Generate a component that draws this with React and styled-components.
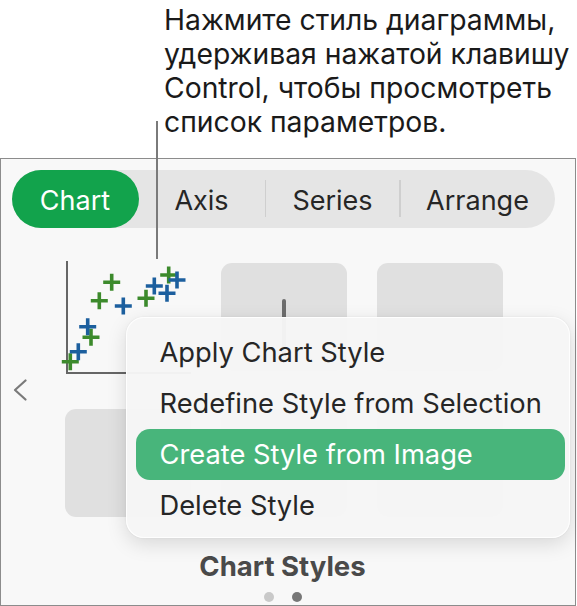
import React from 'react';
import styled, { createGlobalStyle } from 'styled-components';

const GlobalStyle = createGlobalStyle`
  body {
    margin: 0;
    background: #ffffff;
    font-family: 'Inter', 'Liberation Sans', sans-serif;
  }
`;

const Page = styled.div`
  position: relative;
  width: 577px;
  height: 606px;
  overflow: hidden;
`;

const Callout = styled.div`
  box-sizing: border-box;
  height: 158px;
  padding: 3px 0 0 164px;
  font-size: 28.3px;
  line-height: 34px;
  color: #1a1a1a;
`;

const Leader = styled.div`
  position: absolute;
  left: 156px;
  top: 121px;
  width: 1.5px;
  height: 138px;
  background: #7a7a7a;
  z-index: 3;
`;

const Panel = styled.div`
  position: relative;
  box-sizing: border-box;
  width: 576px;
  height: 448px;
  border: 1.5px solid #8c8c8c;
  background: #f8f8f8;
  padding: 10.5px 0 0 10.5px;
`;

const TabBar = styled.div`
  display: flex;
  align-items: center;
  width: 543px;
  height: 58px;
  border-radius: 29px;
  background: #e5e5e5;
`;

const Tab = styled.div`
  display: flex;
  align-items: center;
  justify-content: center;
  box-sizing: border-box;
  width: ${(p) => p.$w}px;
  height: 58px;
  padding-top: 3px;
  border-radius: 29px;
  font-size: 27px;
  color: ${(p) => (p.$active ? '#ffffff' : '#262626')};
  background: ${(p) => (p.$active ? '#12a34c' : 'transparent')};
`;

const Divider = styled.div`
  width: 1.5px;
  height: 37px;
  background: #cfcfcf;
`;

const GalleryRow = styled.div`
  display: flex;
  align-items: center;
  margin-top: 35px;
`;

const Chevron = styled.svg`
  flex: none;
  margin: 0 38px 0 1.5px;
`;

const Grid = styled.div`
  display: grid;
  grid-template-columns: repeat(3, 126px);
  grid-auto-rows: 108px;
  column-gap: 30px;
  row-gap: 38px;
`;

const Tile = styled.div`
  position: relative;
  border-radius: 11px;
  background: ${(p) => (p.$plain ? 'transparent' : '#e0e0e0')};
`;

const TileArt = styled.svg`
  position: absolute;
  left: 0;
  top: 0;
  overflow: visible;
`;

const Footer = styled.div`
  width: 438px;
  margin-left: 52px;
  display: flex;
  flex-direction: column;
  align-items: center;
`;

const Title = styled.div`
  margin-top: 33px;
  font-size: 27.5px;
  line-height: 32px;
  font-weight: 700;
  color: #4a4a4a;
`;

const Dots = styled.div`
  display: flex;
  gap: 18px;
  margin-top: 10px;
`;

const Dot = styled.div`
  width: 10px;
  height: 10px;
  border-radius: 50%;
  background: ${(p) => (p.$on ? '#777777' : '#c9c9c9')};
`;

const Menu = styled.div`
  position: absolute;
  left: 124.5px;
  top: 157.5px;
  box-sizing: border-box;
  width: 444px;
  height: 221px;
  padding: 9px 4px 8px 9px;
  border-radius: 18px;
  background: rgba(246, 246, 246, 0.97);
  border: 1px solid rgba(255, 255, 255, 0.9);
  box-shadow: 0 6px 20px rgba(0, 0, 0, 0.13), 0 0 2px rgba(0, 0, 0, 0.08);
  z-index: 4;
`;

const MenuItem = styled.div`
  display: flex;
  align-items: center;
  height: 51px;
  padding-left: 24px;
  border-radius: 14px;
  font-size: 27.3px;
  color: ${(p) => (p.$hot ? '#ffffff' : '#262626')};
  background: ${(p) => (p.$hot ? '#48b57b' : 'transparent')};
`;

const green = [
  [46.7, 19.3],
  [34.3, 37.7],
  [81, 35.3],
  [103.7, 12],
  [26, 74.3],
  [5.3, 98.7],
];

const blue = [
  [58.3, 43],
  [89.3, 23],
  [102, 30.3],
  [112, 17],
  [22.7, 63.7],
  [13.3, 88.7],
];

const Plus = ({ x, y, color }) => (
  <path
    d={`M${x - 8.5} ${y}H${x + 8.5}M${x} ${y - 8.5}V${y + 8.5}`}
    stroke={color}
    strokeWidth="3.6"
    fill="none"
  />
);

const ScatterArt = () => (
  <TileArt width="126" height="108" viewBox="0 0 126 108">
    <path d="M2 -2V110H126" stroke="#666" strokeWidth="2" fill="none" />
    {green.map(([x, y], i) => (
      <Plus key={'g' + i} x={x} y={y} color="#3c8a2c" />
    ))}
    {blue.map(([x, y], i) => (
      <Plus key={'b' + i} x={x} y={y} color="#1c5f9e" />
    ))}
  </TileArt>
);

const ColumnArt = () => (
  <TileArt width="126" height="108" viewBox="0 0 126 108">
    <rect x="61" y="36" width="4" height="56" rx="2" fill="#6d6d6d" />
  </TileArt>
);

const tabs = [
  { label: 'Chart', w: 127, active: true },
  { label: 'Axis', w: 126 },
  { label: 'Series', w: 133, divider: true },
  { label: 'Arrange', w: 154, divider: true },
];

const items = [
  'Apply Chart Style',
  'Redefine Style from Selection',
  'Create Style from Image',
  'Delete Style',
];

export default function App() {
  return (
    <Page>
      <GlobalStyle />
      <Callout>
        Нажмите стиль диаграммы,
        <br />
        удерживая нажатой клавишу
        <br />
        Control, чтобы просмотреть
        <br />
        список параметров.
      </Callout>
      <Leader />
      <Panel>
        <TabBar>
          {tabs.map((t) => (
            <React.Fragment key={t.label}>
              {t.divider && <Divider />}
              <Tab $w={t.w} $active={t.active}>
                {t.label}
              </Tab>
            </React.Fragment>
          ))}
        </TabBar>
        <GalleryRow>
          <Chevron width="14" height="22" viewBox="0 0 14 22">
            <path
              d="M12.5 1.5L2 11l10.5 9.5"
              stroke="#7a7a7a"
              strokeWidth="2.2"
              strokeLinecap="round"
              strokeLinejoin="round"
              fill="none"
            />
          </Chevron>
          <Grid>
            <Tile $plain>
              <ScatterArt />
            </Tile>
            <Tile>
              <ColumnArt />
            </Tile>
            <Tile />
            <Tile />
            <Tile />
            <Tile />
          </Grid>
        </GalleryRow>
        <Footer>
          <Title>Chart Styles</Title>
          <Dots>
            <Dot />
            <Dot $on />
          </Dots>
        </Footer>
        <Menu>
          {items.map((label) => (
            <MenuItem key={label} $hot={label === 'Create Style from Image'}>
              {label}
            </MenuItem>
          ))}
        </Menu>
      </Panel>
    </Page>
  );
}
